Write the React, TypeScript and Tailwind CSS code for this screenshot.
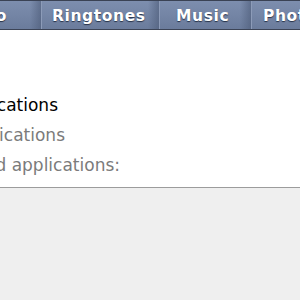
import React from "react";

const tabText =
  "font-['DejaVu_Sans',sans-serif] font-bold text-[15.5px] tracking-[0.6px] text-white [text-shadow:0_1px_1px_rgba(20,30,50,0.8)] whitespace-nowrap";

function Tab({ label, width, pad, first }: { label: string; width: number; pad: number; first?: boolean }) {
  return (
    <div
      className={`relative flex h-full shrink-0 items-center overflow-visible bg-gradient-to-b from-[#7d8eae] to-[#6b7c9c] ${first ? "justify-end" : ""}`}
      style={{ width, paddingLeft: first ? 0 : pad, paddingRight: first ? pad : 0 }}
    >
      <span className={`${tabText} pt-[3px]`}>{label}</span>
      <div className="absolute right-0 top-0 h-full w-[12px] bg-gradient-to-r from-transparent to-[#4e5d7a]/70" />
      <div className="absolute right-0 top-0 h-full w-px bg-[#8c9bb8]" />
    </div>
  );
}

export default function App() {
  return (
    <div className="relative flex h-[300px] w-[300px] flex-col overflow-hidden bg-white font-['DejaVu_Sans',sans-serif]">
      <div className="flex h-[30px] shrink-0 flex-col">
        <div className="h-px bg-[#3a4254]" />
        <div className="flex h-[28px] overflow-visible">
          <Tab label="Info" width={42} pad={35} first />
          <Tab label="Ringtones" width={118} pad={10} />
          <Tab label="Music" width={92} pad={16} />
          <Tab label="Photos" width={90} pad={11} />
        </div>
        <div className="h-px bg-[#3c4456]" />
      </div>
      <div className="flex h-[157px] shrink-0 flex-col pt-[60px] text-[17px] leading-[30px]">
        <div className="flex w-[58px] justify-end">
          <span className="whitespace-nowrap text-[#000]">Sync applications</span>
        </div>
        <div className="flex w-[65px] justify-end">
          <span className="whitespace-nowrap text-[#7b7b7b]">All applications</span>
        </div>
        <div className="flex w-[120px] justify-end">
          <span className="whitespace-nowrap text-[#7b7b7b]">Selected applications:</span>
        </div>
      </div>
      <div className="h-px shrink-0 bg-[#9c9c9c]" />
      <div className="flex-1 bg-[#efefef]" />
    </div>
  );
}
